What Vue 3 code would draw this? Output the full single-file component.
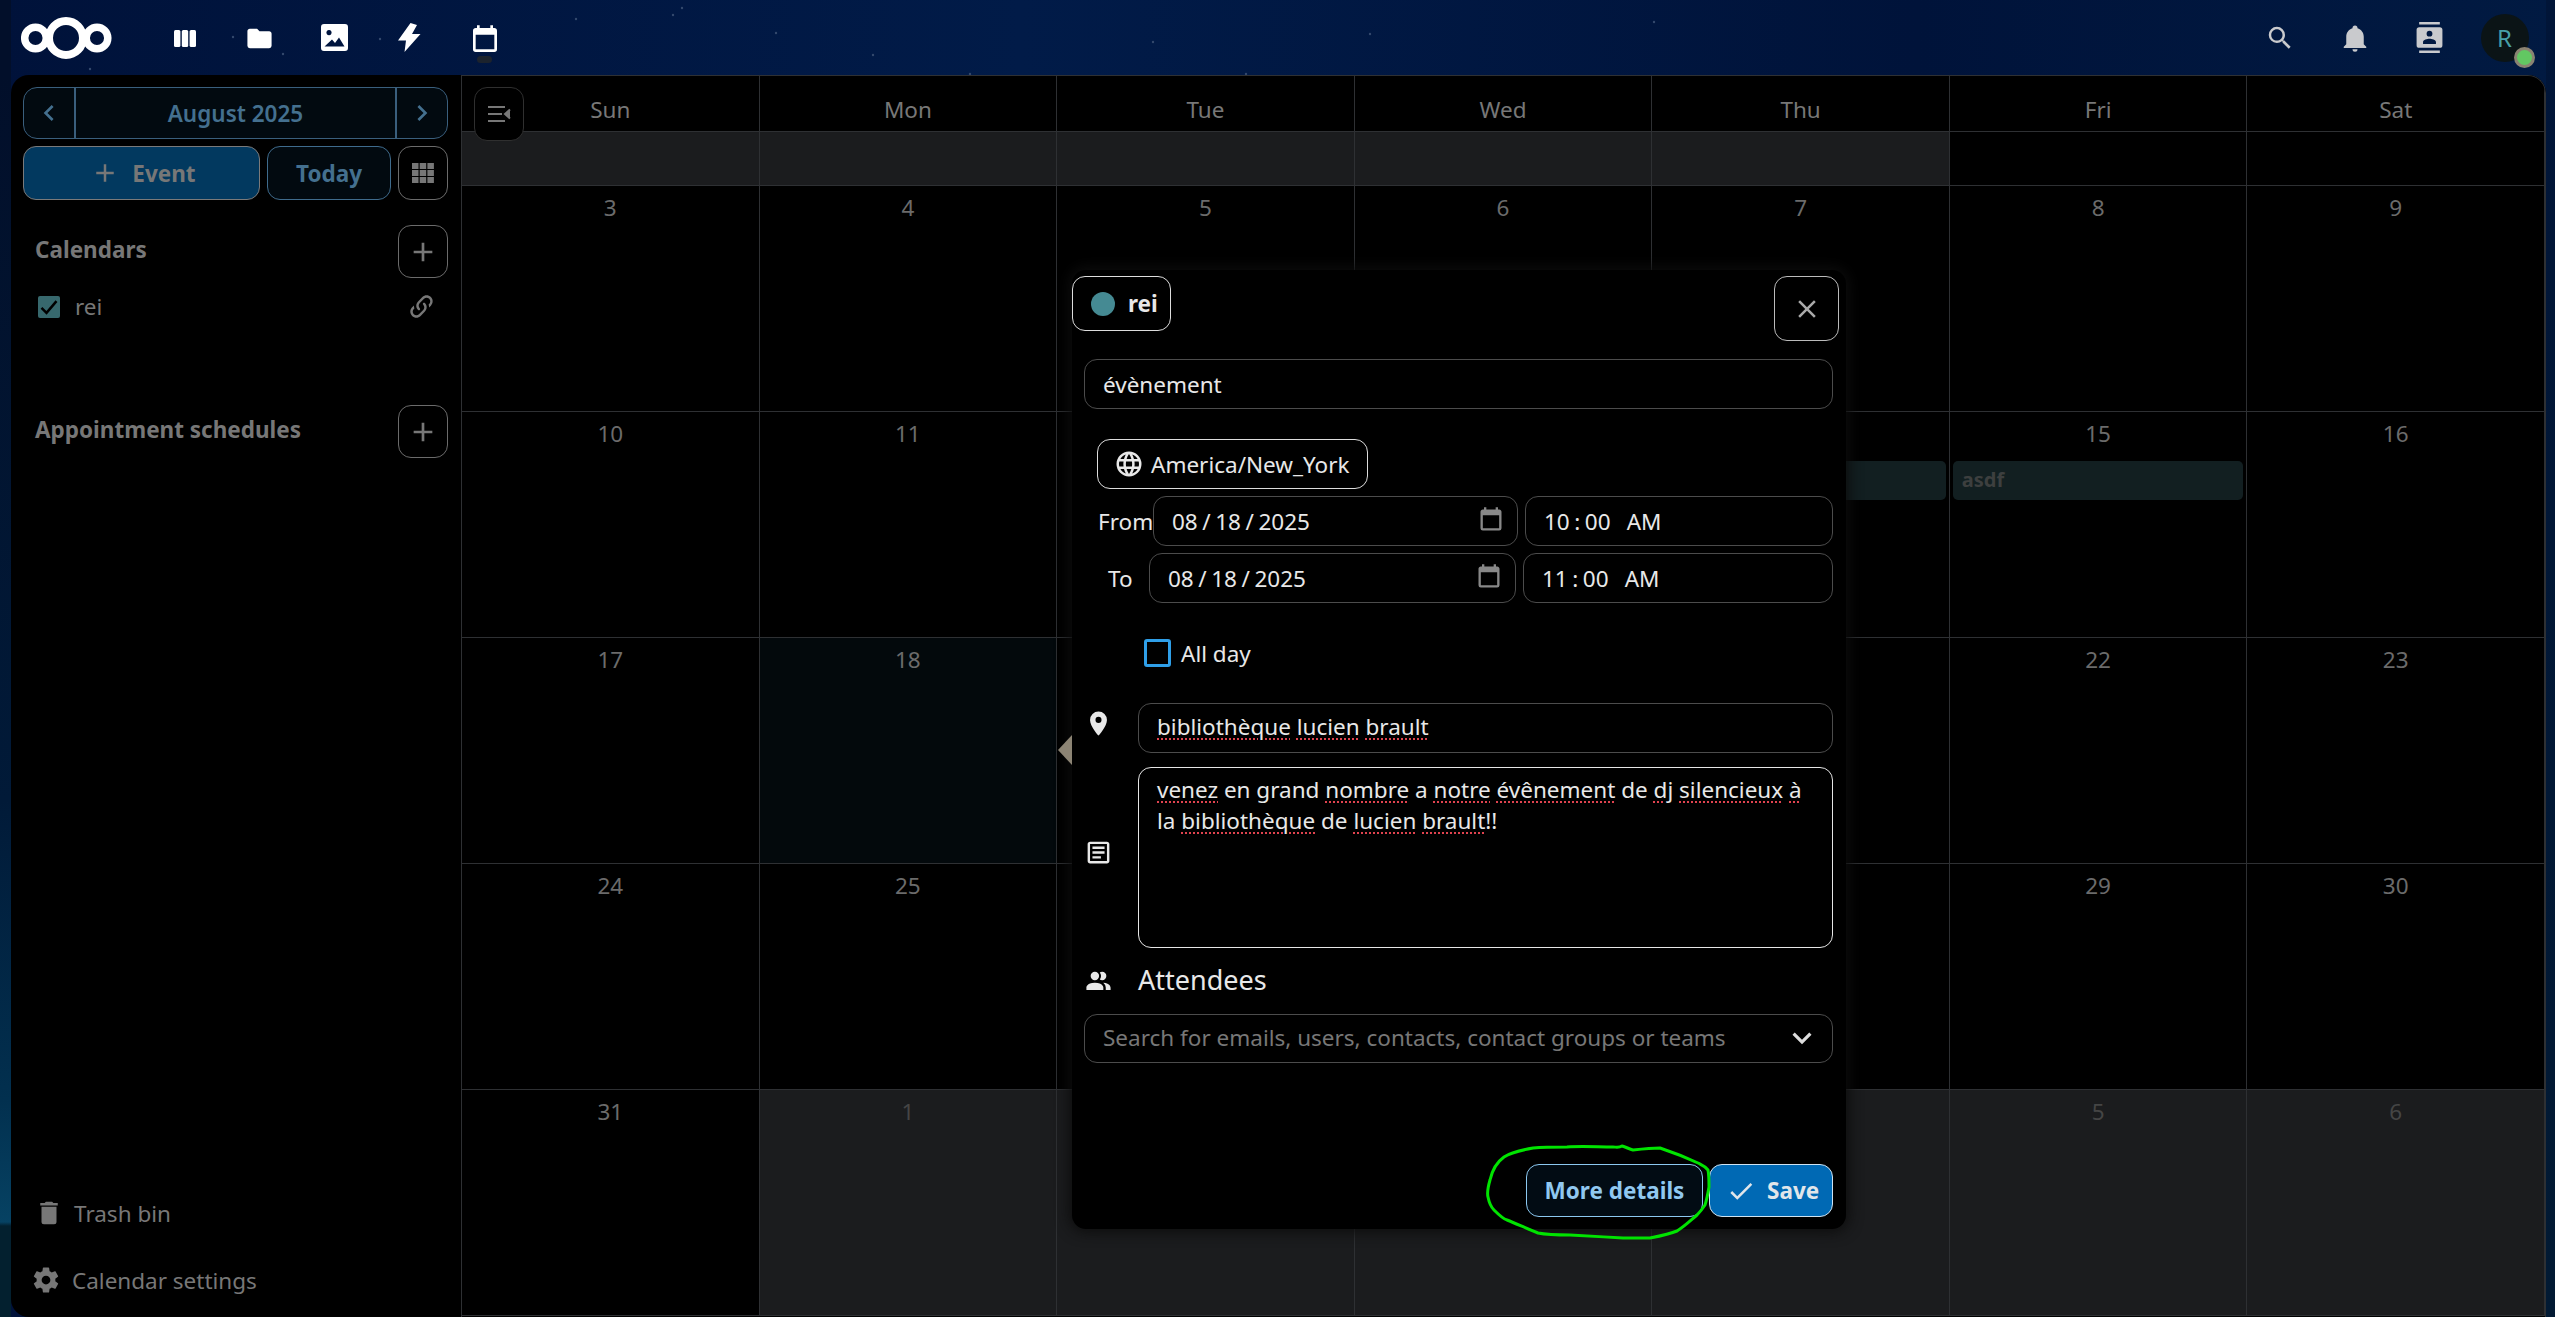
<template>
  <div class="page">
    <!-- Background stars -->
    <svg class="stars" width="2555" height="75">
      <circle v-for="(s, i) in stars" :key="i" :cx="s[0]" :cy="s[1]" r="1.2" fill="#34496d" />
    </svg>

    <!-- Top bar -->
    <header class="topbar">
      <svg class="logo" width="91" height="42" viewBox="0 0 91 42">
        <circle cx="14.5" cy="21" r="10.8" />
        <circle cx="45" cy="21" r="17" />
        <circle cx="76" cy="21" r="10.8" />
      </svg>
      <nav class="apps">
        <span class="app">
          <svg class="shift-1" width="22" height="17" viewBox="0 0 22 17"><rect width="6.4" height="17" rx="1.5" /><rect x="7.8" width="6.4" height="17" rx="1.5" /><rect x="15.6" width="6.4" height="17" rx="1.5" /></svg>
        </span>
        <span class="app">
          <svg class="shift-1" width="29" height="29" viewBox="0 0 24 24"><path :d="icons.folder" /></svg>
        </span>
        <span class="app">
          <svg width="27" height="27" viewBox="0 0 27 27">
            <path fill-rule="evenodd" d="M3 0h21a3 3 0 0 1 3 3v21a3 3 0 0 1-3 3H3a3 3 0 0 1-3-3V3a3 3 0 0 1 3-3zM8 6a2.6 2.6 0 1 0 .01 0zM3.5 22.5h20l-5.5-9-4 5.500-3-3.500z" />
          </svg>
        </span>
        <span class="app">
          <svg width="23" height="29" viewBox="0 0 23 29"><path d="M12.500 0 0 17.500h8L6.500 29 22.500 11h-8.500L19 2z" /></svg>
        </span>
        <span class="app app-active">
          <svg class="shift-5" width="32" height="32" viewBox="0 0 24 24"><path :d="icons.calendar" /></svg>
          <i class="app-dot"></i>
        </span>
      </nav>
      <div class="top-right">
        <span class="app top-icon"><svg width="30" height="30" viewBox="0 0 24 24"><path :d="icons.search" /></svg></span>
        <span class="app top-icon"><svg width="30" height="30" viewBox="0 0 24 24"><path :d="icons.bell" /></svg></span>
        <span class="app top-icon"><svg width="31" height="31" viewBox="0 0 24 24"><path :d="icons.contacts" /></svg></span>
        <span class="app">
          <span class="avatar">R<i class="status"></i></span>
        </span>
      </div>
    </header>

    <div class="app-shell">
      <!-- Sidebar -->
      <aside class="sidebar">
        <div class="month-nav">
          <span class="month-arrow"><svg width="32" height="32" viewBox="0 0 24 24"><path :d="icons.left" /></svg></span>
          <span class="month-name">August 2025</span>
          <span class="month-arrow month-arrow-right"><svg width="32" height="32" viewBox="0 0 24 24"><path :d="icons.right" /></svg></span>
        </div>
        <div class="side-actions">
          <button class="btn-event"><svg width="30" height="30" viewBox="0 0 24 24"><path :d="icons.plus" /></svg>Event</button>
          <button class="btn-today">Today</button>
          <button class="btn-square">
            <svg width="22" height="20" viewBox="0 0 22 20"><g><rect width="6.500" height="6" /><rect x="7.700" width="6.500" height="6" /><rect x="15.400" width="6.500" height="6" /><rect y="7" width="6.500" height="6" /><rect x="7.700" y="7" width="6.500" height="6" /><rect x="15.400" y="7" width="6.500" height="6" /><rect y="14" width="6.500" height="6" /><rect x="7.700" y="14" width="6.500" height="6" /><rect x="15.400" y="14" width="6.500" height="6" /></g></svg>
          </button>
        </div>

        <div class="section-head first">
          <span>Calendars</span>
          <button class="btn-square tall"><svg width="32" height="32" viewBox="0 0 24 24"><path :d="icons.plus" /></svg></button>
        </div>
        <div class="cal-row">
          <span class="cal-check"><svg width="20" height="20" viewBox="0 0 24 24"><path d="M3 13l6 6L21 5" fill="none" stroke="#000" stroke-width="3" /></svg></span>
          <span class="cal-name">rei</span>
          <svg class="cal-link" width="29" height="29" viewBox="0 0 24 24"><path :d="icons.link" /></svg>
        </div>

        <div class="section-head second">
          <span>Appointment schedules</span>
          <button class="btn-square tall"><svg width="32" height="32" viewBox="0 0 24 24"><path :d="icons.plus" /></svg></button>
        </div>

        <div class="side-footer">
          <div class="foot-row trash"><svg width="30" height="30" viewBox="0 0 24 24"><path :d="icons.trash" /></svg>Trash bin</div>
          <div class="foot-row"><svg width="30" height="30" viewBox="0 0 24 24"><path :d="icons.cog" /></svg>Calendar settings</div>
        </div>
      </aside>

      <!-- Month view -->
      <main class="month">
        <div class="month-grid">
          <div v-for="d in weekdays" :key="d" class="head-cell">{{ d }}</div>
          <div
            v-for="(c, i) in cells"
            :key="i"
            class="cell"
            :class="{ out: c.out, today: c.day === 18 && !c.out }"
          >
            <span v-if="c.day" class="day-num">{{ c.day }}</span>
            <div v-if="c.event !== undefined" class="chip">{{ c.event }}</div>
          </div>
        </div>
        <button class="nav-toggle">
          <svg width="24" height="18" viewBox="0 0 24 18" fill="none" stroke="currentColor" stroke-width="2">
            <path d="M1 2h17M1 9h14M1 16h17M23 4.500l-5 4.500 5 4.500" />
          </svg>
        </button>
      </main>
    </div>

    <!-- Event popover -->
    <section class="popover">
      <i class="popover-arrow"></i>
      <div class="pop-head">
        <div class="cal-chip"><i class="cal-dot"></i>rei</div>
        <button class="pop-close"><svg width="30" height="30" viewBox="0 0 24 24"><path :d="icons.close" /></svg></button>
      </div>

      <div class="field title-field">évènement</div>

      <button class="tz-btn"><svg width="30" height="30" viewBox="0 0 24 24"><path :d="icons.web" /></svg>America/New_York</button>

      <div class="date-row">
        <span class="row-label from">From</span>
        <div class="field date-field from-date">08 / 18 / 2025<svg width="28" height="28" viewBox="0 0 24 24"><path :d="icons.calendar" /></svg></div>
        <div class="field time-field">10 : 00<span class="ampm">AM</span></div>
      </div>
      <div class="date-row">
        <span class="row-label to">To</span>
        <div class="field date-field to-date">08 / 18 / 2025<svg width="28" height="28" viewBox="0 0 24 24"><path :d="icons.calendar" /></svg></div>
        <div class="field time-field">11 : 00<span class="ampm">AM</span></div>
      </div>

      <label class="allday"><i class="allday-box"></i>All day</label>

      <div class="icon-row location-row">
        <svg class="row-icon" width="29" height="29" viewBox="0 0 24 24"><path :d="icons.marker" /></svg>
        <div class="field grow">
          <span class="typo">bibliothèque</span> <span class="typo">lucien</span> <span class="typo">brault</span>
        </div>
      </div>
      <div class="icon-row notes-row">
        <svg class="row-icon" width="29" height="29" viewBox="0 0 24 24"><path :d="icons.notes" /></svg>
        <div class="notes"><span class="typo">venez</span> en grand <span class="typo">nombre</span> a <span class="typo">notre</span> <span class="typo">évênement</span> de <span class="typo">dj</span> <span class="typo">silencieux</span> <span class="typo">à</span> la <span class="typo">bibliothèque</span> de <span class="typo">lucien</span> <span class="typo">brault</span>!!</div>
      </div>

      <div class="attendees">
        <svg class="row-icon" width="29" height="29" viewBox="0 0 24 24"><path :d="icons.people" /></svg>
        <span>Attendees</span>
      </div>
      <div class="field search-field">
        Search for emails, users, contacts, contact groups or teams
        <svg width="38" height="38" viewBox="0 0 24 24"><path :d="icons.down" /></svg>
      </div>

      <div class="pop-actions">
        <button class="btn-more">More details</button>
        <button class="btn-save"><svg width="30" height="30" viewBox="0 0 24 24"><path :d="icons.check" /></svg>Save</button>
      </div>
    </section>

    <!-- Hand drawn annotation -->
    <svg class="scribble" width="2555" height="1317">
      <path
        d="M1533 1148C1522 1150 1510 1153 1504 1157C1497 1162 1492 1171 1490 1180C1488 1187 1487 1193 1488 1197C1489 1202 1491 1207 1494 1210C1499 1215 1503 1219 1507 1220C1517 1224 1530 1230 1538 1233C1548 1235 1560 1235 1570 1235C1590 1236 1605 1237 1623 1238C1632 1238 1642 1238 1650 1238C1660 1236 1670 1234 1677 1231C1685 1226 1691 1220 1697 1215C1701 1211 1703 1208 1705 1205C1707 1199 1708 1193 1709 1187C1709 1181 1709 1175 1708 1170C1705 1166 1702 1165 1698 1163C1685 1157 1672 1152 1660 1148C1652 1148 1642 1149 1633 1150C1629 1149 1626 1147 1622 1146C1619 1148 1616 1147 1613 1147C1598 1147 1582 1146 1567 1147C1555 1147 1544 1147 1533 1148Z"
      />
    </svg>
  </div>
</template>

<script setup>
const stars = [
  [576, 19], [380, 39], [233, 37], [283, 54], [682, 8], [673, 15], [776, 33], [873, 55],
  [1153, 42], [1370, 34], [1654, 22], [970, 74], [1246, 74], [90, 69]
]

const icons = {
  folder: 'M10,4H4C2.89,4 2,4.89 2,6V18A2,2 0 0,0 4,20H20A2,2 0 0,0 22,18V8C22,6.89 21.1,6 20,6H12L10,4Z',
  calendar: 'M19,19H5V8H19M16,1V3H8V1H6V3H5C3.89,3 3,3.89 3,5V19A2,2 0 0,0 5,21H19A2,2 0 0,0 21,19V5C21,3.89 20.1,3 19,3H18V1H16Z',
  search: 'M9.5,3A6.5,6.5 0 0,1 16,9.5C16,11.11 15.41,12.59 14.44,13.73L14.71,14H15.5L20.5,19L19,20.5L14,15.5V14.71L13.73,14.44C12.59,15.41 11.11,16 9.5,16A6.5,6.5 0 0,1 3,9.5A6.5,6.5 0 0,1 9.5,3M9.5,5C7,5 5,7 5,9.5C5,12 7,14 9.5,14C12,14 14,12 14,9.5C14,7 12,5 9.5,5Z',
  bell: 'M21,19V20H3V19L5,17V11C5,7.9 7.03,5.17 10,4.29C10,4.19 10,4.1 10,4A2,2 0 0,1 12,2A2,2 0 0,1 14,4C14,4.1 14,4.19 14,4.29C16.97,5.17 19,7.9 19,11V17L21,19M14,21A2,2 0 0,1 12,23A2,2 0 0,1 10,21',
  contacts: 'M20,0H4V2H20V0M4,24H20V22H4V24M20,4H4A2,2 0 0,0 2,6V18A2,2 0 0,0 4,20H20A2,2 0 0,0 22,18V6A2,2 0 0,0 20,4M12,6.75A2.25,2.25 0 0,1 14.25,9A2.25,2.25 0 0,1 12,11.25A2.25,2.25 0 0,1 9.75,9A2.25,2.25 0 0,1 12,6.75M17,17H7V15.5C7,13.83 10.33,13 12,13C13.67,13 17,13.83 17,15.5V17Z',
  left: 'M15.41,16.58L10.83,12L15.41,7.41L14,6L8,12L14,18L15.41,16.58Z',
  right: 'M8.59,16.58L13.17,12L8.59,7.41L10,6L16,12L10,18L8.59,16.58Z',
  down: 'M7.41,8.58L12,13.17L16.59,8.58L18,10L12,16L6,10L7.41,8.58Z',
  plus: 'M19,13H13V19H11V13H5V11H11V5H13V11H19V13Z',
  close: 'M19,6.41L17.59,5L12,10.59L6.41,5L5,6.41L10.59,12L5,17.59L6.41,19L12,13.41L17.59,19L19,17.59L13.41,12L19,6.41Z',
  check: 'M21,7L9,19L3.5,13.5L4.91,12.09L9,16.17L19.59,5.59L21,7Z',
  trash: 'M19,4H15.5L14.5,3H9.5L8.5,4H5V6H19M6,19A2,2 0 0,0 8,21H16A2,2 0 0,0 18,19V7H6V19Z',
  cog: 'M12,15.5A3.5,3.5 0 0,1 8.5,12A3.5,3.5 0 0,1 12,8.5A3.5,3.5 0 0,1 15.5,12A3.5,3.5 0 0,1 12,15.5M19.43,12.97C19.47,12.65 19.5,12.33 19.5,12C19.5,11.67 19.47,11.34 19.43,11L21.54,9.37C21.73,9.22 21.78,8.95 21.66,8.73L19.66,5.27C19.54,5.05 19.27,4.96 19.05,5.05L16.56,6.05C16.04,5.66 15.5,5.32 14.87,5.07L14.5,2.42C14.46,2.18 14.25,2 14,2H10C9.75,2 9.54,2.18 9.5,2.42L9.13,5.07C8.5,5.32 7.96,5.66 7.44,6.05L4.95,5.05C4.73,4.96 4.46,5.05 4.34,5.27L2.34,8.73C2.21,8.95 2.27,9.22 2.46,9.37L4.57,11C4.53,11.34 4.5,11.67 4.5,12C4.5,12.33 4.53,12.65 4.57,12.97L2.46,14.63C2.27,14.78 2.21,15.05 2.34,15.27L4.34,18.73C4.46,18.95 4.73,19.03 4.95,18.95L7.44,17.94C7.96,18.34 8.5,18.68 9.13,18.93L9.5,21.58C9.54,21.82 9.75,22 10,22H14C14.25,22 14.46,21.82 14.5,21.58L14.87,18.93C15.5,18.67 16.04,18.34 16.56,17.94L19.05,18.95C19.27,19.03 19.54,18.95 19.66,18.73L21.66,15.27C21.78,15.05 21.73,14.78 21.54,14.63L19.43,12.97Z',
  link: 'M10.59,13.41C11,13.8 11,14.44 10.59,14.83C10.2,15.22 9.56,15.22 9.17,14.83C7.22,12.88 7.22,9.71 9.17,7.76L12.71,4.22C14.66,2.27 17.83,2.27 19.78,4.22C21.73,6.17 21.73,9.34 19.78,11.29L18.29,12.78C18.3,11.96 18.17,11.14 17.89,10.36L18.36,9.88C19.54,8.71 19.54,6.81 18.36,5.64C17.19,4.46 15.29,4.46 14.12,5.64L10.59,9.17C9.41,10.34 9.41,12.24 10.59,13.41M13.41,9.17C13.8,8.78 14.44,8.78 14.83,9.17C16.78,11.12 16.78,14.29 14.83,16.24L11.29,19.78C9.34,21.73 6.17,21.73 4.22,19.78C2.27,17.83 2.27,14.66 4.22,12.71L5.71,11.22C5.7,12.04 5.83,12.86 6.11,13.65L5.64,14.12C4.46,15.29 4.46,17.19 5.64,18.36C6.81,19.54 8.71,19.54 9.88,18.36L13.41,14.83C14.59,13.66 14.59,11.76 13.41,10.59C13,10.2 13,9.56 13.41,9.17Z',
  web: 'M16.36,14C16.44,13.34 16.5,12.68 16.5,12C16.5,11.32 16.44,10.66 16.36,10H19.74C19.9,10.64 20,11.31 20,12C20,12.69 19.9,13.36 19.74,14M14.59,19.56C15.19,18.45 15.65,17.25 15.97,16H18.92C17.96,17.65 16.43,18.93 14.59,19.56M14.34,14H9.66C9.56,13.34 9.5,12.68 9.5,12C9.5,11.32 9.56,10.65 9.66,10H14.34C14.43,10.65 14.5,11.32 14.5,12C14.5,12.68 14.43,13.34 14.34,14M12,19.96C11.17,18.76 10.5,17.43 10.09,16H13.91C13.5,17.43 12.83,18.76 12,19.96M8,8H5.08C6.03,6.34 7.57,5.06 9.4,4.44C8.8,5.55 8.35,6.75 8,8M5.08,16H8C8.35,17.25 8.8,18.45 9.4,19.56C7.57,18.93 6.03,17.65 5.08,16M4.26,14C4.1,13.36 4,12.69 4,12C4,11.31 4.1,10.64 4.26,10H7.64C7.56,10.66 7.5,11.32 7.5,12C7.5,12.68 7.56,13.34 7.64,14M12,4.03C12.83,5.23 13.5,6.57 13.91,8H10.09C10.5,6.57 11.17,5.23 12,4.03M18.92,8H15.97C15.65,6.75 15.19,5.55 14.59,4.44C16.43,5.07 17.96,6.34 18.92,8M12,2C6.47,2 2,6.5 2,12A10,10 0 0,0 12,22A10,10 0 0,0 22,12A10,10 0 0,0 12,2Z',
  marker: 'M12,11.5A2.5,2.5 0 0,1 9.5,9A2.5,2.5 0 0,1 12,6.5A2.5,2.5 0 0,1 14.5,9A2.5,2.5 0 0,1 12,11.5M12,2A7,7 0 0,0 5,9C5,14.25 12,22 12,22C12,22 19,14.25 19,9A7,7 0 0,0 12,2Z',
  notes: 'M5,3C3.89,3 3,3.89 3,5V19C3,20.11 3.89,21 5,21H19C20.11,21 21,20.11 21,19V5C21,3.89 20.11,3 19,3H5M5,5H19V19H5V5M7,7V9H17V7H7M7,11V13H17V11H7M7,15V17H14V15H7Z',
  people: 'M16 17V19H2V17S2 13 9 13 16 17 16 17M12.5 7.5A3.5 3.5 0 1 0 9 11A3.5 3.5 0 0 0 12.5 7.5M15.94 13A5.32 5.32 0 0 1 18 17V19H22V17S22 13.37 15.94 13M15 4A3.39 3.39 0 0 0 13.07 4.59A5 5 0 0 1 13.07 10.41A3.39 3.39 0 0 0 15 11A3.5 3.5 0 0 0 15 4Z'
}

const weekdays = ['Sun', 'Mon', 'Tue', 'Wed', 'Thu', 'Fri', 'Sat']

// days that sit behind the popover, their numbers can't be seen anyway
const behindPopover = [12, 13, 14, 19, 20, 21, 26, 27, 28]
const behindPopoverNext = [2, 3, 4]

const cells = [
  { out: true }, { out: true }, { out: true }, { out: true }, { out: true }, {}, {}
]
for (let day = 3; day <= 31; day++) {
  const cell = { day: behindPopover.includes(day) ? null : day }
  if (day === 14) cell.event = ''
  if (day === 15) cell.event = 'asdf'
  cells.push(cell)
}
for (let day = 1; day <= 6; day++) {
  cells.push({ day: behindPopoverNext.includes(day) ? null : day, out: true })
}
</script>

<style>
html, body {
  margin: 0;
  background: #00133a;
}
</style>

<style scoped>
.page {
  position: relative;
  width: 2555px;
  height: 1317px;
  overflow: hidden;
  font-family: 'Noto Sans', sans-serif;
  font-size: 22.5px;
  color: #e8e8e8;
  background:
    linear-gradient(180deg, #020f2a 75px, #011a38 800px, #02304f 1100px, #064263 1222px, #03202f 1226px) left top / 11px 100% no-repeat,
    linear-gradient(180deg, #011538, #021a33) right top / 9px 100% no-repeat,
    linear-gradient(90deg, #00123a 0, #011b48 40%, #00133a 75%, #011a42 100%);
}

.stars {
  position: absolute;
  left: 0;
  top: 0;
}

button {
  font: inherit;
  padding: 0;
  cursor: pointer;
}

svg {
  fill: currentColor;
  flex: none;
  display: block;
}

/* Top bar */
.topbar {
  position: relative;
  height: 75px;
  display: flex;
  align-items: center;
  padding-left: 21px;
  padding-right: 13px;
  box-sizing: border-box;
}

.logo circle {
  fill: none;
  stroke: #fff;
  stroke-width: 7.500;
}

.logo circle:nth-child(2) {
  stroke-width: 8;
}

.apps {
  display: flex;
  margin-left: 35px;
  color: #fff;
}

.app {
  position: relative;
  width: 75px;
  height: 75px;
  display: flex;
  align-items: center;
  justify-content: center;
}

.shift-1 {
  margin-top: 1px;
}

.shift-5 {
  margin-top: 5px;
}

.app-dot {
  position: absolute;
  left: 30px;
  top: 56px;
  width: 15px;
  height: 7px;
  border-radius: 4px;
  background: #1c232d;
}

.top-right {
  margin-left: auto;
  display: flex;
}

.top-icon {
  color: #c9cacd;
}

.avatar {
  position: relative;
  width: 48px;
  height: 48px;
  border-radius: 50%;
  background: #0b1416;
  color: #47a0a8;
  font-size: 24px;
  display: flex;
  align-items: center;
  justify-content: center;
}

.status {
  position: absolute;
  right: -6px;
  bottom: -6px;
  width: 15px;
  height: 15px;
  border-radius: 50%;
  background: #62c762;
  border: 3px solid #8a8372;
}

/* Shell */
.app-shell {
  position: relative;
  margin-left: 11px;
  margin-right: 9px;
  height: 1242px;
  display: flex;
  background: #000;
  border-radius: 18px 18px 0 18px;
  overflow: hidden;
}

.sidebar {
  width: 450px;
  flex: none;
  box-sizing: border-box;
  padding: 12px 13px 0 12px;
  display: flex;
  flex-direction: column;
  color: #777;
}

.month-nav {
  height: 52px;
  box-sizing: border-box;
  display: flex;
  align-items: center;
  border: 1px solid #3a5f7d;
  border-radius: 14px;
  background: #020a10;
  color: #44708f;
}

.month-arrow {
  width: 50px;
  height: 100%;
  display: flex;
  align-items: center;
  justify-content: center;
  border-right: 2px solid #3a5f7d;
}

.month-arrow-right {
  border-right: 0;
  border-left: 2px solid #3a5f7d;
}

.month-name {
  flex: 1;
  text-align: center;
  font-weight: 600;
}

.side-actions {
  margin-top: 7px;
  display: flex;
  gap: 7px;
}

.btn-event,
.btn-today,
.btn-square {
  height: 54px;
  box-sizing: border-box;
  border-radius: 13px;
  display: flex;
  align-items: center;
  justify-content: center;
  font-weight: 700;
}

.btn-event {
  width: 237px;
  background: #02395f;
  border: 1px solid #7a7a7a;
  color: #777;
  gap: 12px;
  padding-left: 3px;
}

.btn-today {
  width: 124px;
  background: #020a10;
  border: 1px solid #3f6b8c;
  color: #44708f;
}

.btn-square {
  width: 50px;
  background: #000;
  border: 1px solid #6b6b6b;
  color: #777;
}

.btn-square.tall {
  height: 53px;
}

.section-head {
  display: flex;
  align-items: center;
  justify-content: space-between;
  padding-left: 12px;
  font-weight: 700;
}

.section-head span {
  margin-bottom: 5px;
}

.section-head.first {
  margin-top: 25px;
}

.section-head.second {
  margin-top: 76px;
}

.cal-row {
  margin-top: 7px;
  height: 44px;
  display: flex;
  align-items: center;
  padding-left: 15px;
}

.cal-check {
  width: 22px;
  height: 22px;
  border-radius: 2px;
  background: #37686d;
  display: flex;
  align-items: center;
  justify-content: center;
}

.cal-name {
  margin-left: 15px;
  margin-bottom: 2px;
}

.cal-link {
  margin-left: auto;
  margin-right: 12px;
  margin-top: -2px;
}

.side-footer {
  margin-top: auto;
  padding-bottom: 15px;
  display: flex;
  flex-direction: column;
  gap: 23px;
}

.foot-row {
  height: 44px;
  display: flex;
  align-items: center;
  gap: 11px;
  padding-left: 8px;
}

.foot-row.trash {
  gap: 10px;
  padding-left: 11px;
}

/* Month view */
.month {
  position: relative;
  flex: 1;
  border-left: 1px solid #2e3033;
  border-top: 1px solid #2e3033;
  border-right: 1px solid #2e3033;
  border-top-right-radius: 18px;
  overflow: hidden;
}

.month-grid {
  display: grid;
  grid-template-columns: repeat(7, 1fr);
  grid-template-rows: 56px 54px repeat(5, 226px);
}

.head-cell {
  box-sizing: border-box;
  border-right: 1px solid #2e3033;
  border-bottom: 1px solid #2e3033;
  text-align: center;
  padding-top: 19px;
  line-height: 30px;
  color: #777;
}

.cell {
  box-sizing: border-box;
  border-right: 1px solid #2e3033;
  border-bottom: 1px solid #2e3033;
  padding-top: 7px;
  text-align: center;
  color: #6b6b6b;
  line-height: 30px;
}

.cell.out {
  background: #1b1c1e;
  color: #454545;
}

.cell.today {
  background: #03090c;
}

.day-num {
  display: block;
}

.chip {
  height: 39px;
  margin: 42px 3px 0;
  padding-left: 9px;
  border-radius: 5px;
  background: #121f21;
  color: #3d3f3f;
  font-size: 20px;
  font-weight: 700;
  line-height: 38px;
  text-align: left;
}

.day-num + .chip {
  margin-top: 12px;
}

.nav-toggle {
  position: absolute;
  left: 12px;
  top: 11px;
  width: 50px;
  height: 54px;
  background: #000;
  border: 1px solid #2f2f2f;
  border-radius: 13px;
  color: #777;
  display: flex;
  align-items: center;
  justify-content: center;
}

/* Popover */
.popover {
  position: absolute;
  left: 1072px;
  top: 270px;
  width: 774px;
  height: 959px;
  box-sizing: border-box;
  padding: 6px 13px 12px 12px;
  display: flex;
  flex-direction: column;
  background: #000;
  border-radius: 14px;
  box-shadow: 0 0 14px 3px #0d0d0d;
}

.popover-arrow {
  position: absolute;
  left: -14px;
  top: 465px;
  border-style: solid;
  border-width: 15px 14px 15px 0;
  border-color: transparent #8c8474 transparent transparent;
}

.pop-head {
  display: flex;
  justify-content: space-between;
  align-items: flex-start;
  margin: 0 -6px 0 -12px;
}

.cal-chip {
  width: 99px;
  height: 55px;
  box-sizing: border-box;
  border: 1px solid #ddd;
  border-radius: 13px;
  display: flex;
  align-items: center;
  padding-left: 18px;
  gap: 13px;
  font-weight: 700;
}

.cal-dot {
  width: 24px;
  height: 24px;
  border-radius: 50%;
  background: #458a93;
}

.pop-close {
  width: 65px;
  height: 65px;
  background: #000;
  border: 1px solid #bbb;
  border-radius: 13px;
  color: #aaa;
  display: flex;
  align-items: center;
  justify-content: center;
}

.field {
  height: 50px;
  box-sizing: border-box;
  border: 1px solid #4c4c4c;
  border-radius: 13px;
  padding-left: 18px;
  display: flex;
  align-items: center;
  flex: none;
}

.title-field {
  margin-top: 18px;
}

.tz-btn {
  margin: 30px 0 0 13px;
  width: 271px;
  height: 50px;
  background: #000;
  color: #e8e8e8;
  border: 1px solid #ddd;
  border-radius: 13px;
  display: flex;
  align-items: center;
  padding-left: 16px;
  gap: 7px;
}

.date-row {
  margin-top: 7px;
  display: flex;
  align-items: center;
}

.row-label.from {
  width: 69px;
  box-sizing: border-box;
  padding-left: 14px;
  white-space: nowrap;
}

.row-label.to {
  width: 65px;
  box-sizing: border-box;
  padding-left: 24px;
}

.date-field,
.time-field {
  word-spacing: -1.3px;
}

.date-field {
  justify-content: space-between;
  padding-right: 12px;
  margin-right: 7px;
}

.date-field svg {
  color: #888;
  margin-top: -3px;
}

.from-date {
  width: 365px;
}

.to-date {
  width: 367px;
}

.time-field {
  flex: 1;
}

.ampm {
  margin-left: 16px;
}

.allday {
  margin: 36px 0 0 60px;
  height: 28px;
  display: flex;
  align-items: center;
  gap: 10px;
}

.allday-box {
  width: 27px;
  height: 28px;
  box-sizing: border-box;
  border: 3px solid #2f9fe8;
  border-radius: 3px;
}

.icon-row {
  display: flex;
  align-items: center;
}

.location-row {
  margin-top: 36px;
}

.notes-row {
  margin-top: 14px;
}

.location-row .row-icon {
  margin-right: 25px;
  margin-bottom: 10px;
}

.notes-row .row-icon {
  margin-right: 25px;
  margin-bottom: 11px;
}

.grow {
  flex: 1;
  display: block;
  line-height: 46px;
}

.notes {
  flex: 1;
  height: 181px;
  box-sizing: border-box;
  border: 1px solid #e6e6e6;
  border-radius: 13px;
  padding: 6px 18px;
  line-height: 31px;
}

.typo {
  text-decoration: underline dotted #e0434f;
  text-decoration-thickness: 2px;
  text-underline-offset: 3px;
}

.attendees {
  margin-top: 18px;
  height: 32px;
  display: flex;
  align-items: center;
  font-size: 27px;
}

.attendees span {
  margin-bottom: 5px;
}

.attendees .row-icon {
  margin-right: 25px;
  margin-bottom: 2px;
}

.search-field {
  margin-top: 16px;
  height: 49px;
  padding-bottom: 2px;
  color: #777;
  justify-content: space-between;
  padding-right: 11px;
}

.search-field svg {
  color: #ddd;
}

.pop-actions {
  margin-top: auto;
  display: flex;
  justify-content: flex-end;
  gap: 6px;
}

.btn-more,
.btn-save {
  height: 53px;
  box-sizing: border-box;
  border-radius: 13px;
  font-weight: 700;
  display: flex;
  align-items: center;
}

.btn-more {
  width: 177px;
  justify-content: center;
  background: #020c14;
  border: 1px solid #8cc8f0;
  color: #90c8f0;
}

.btn-save {
  width: 124px;
  padding-left: 16px;
  background: #0069b4;
  border: 1px solid #cfe3f2;
  color: #e0e6ea;
  gap: 11px;
}

/* Annotation over everything */
.scribble {
  position: absolute;
  left: 0;
  top: 0;
  pointer-events: none;
  fill: none;
  stroke: #00e400;
  stroke-width: 3;
  stroke-linejoin: round;
}
</style>
